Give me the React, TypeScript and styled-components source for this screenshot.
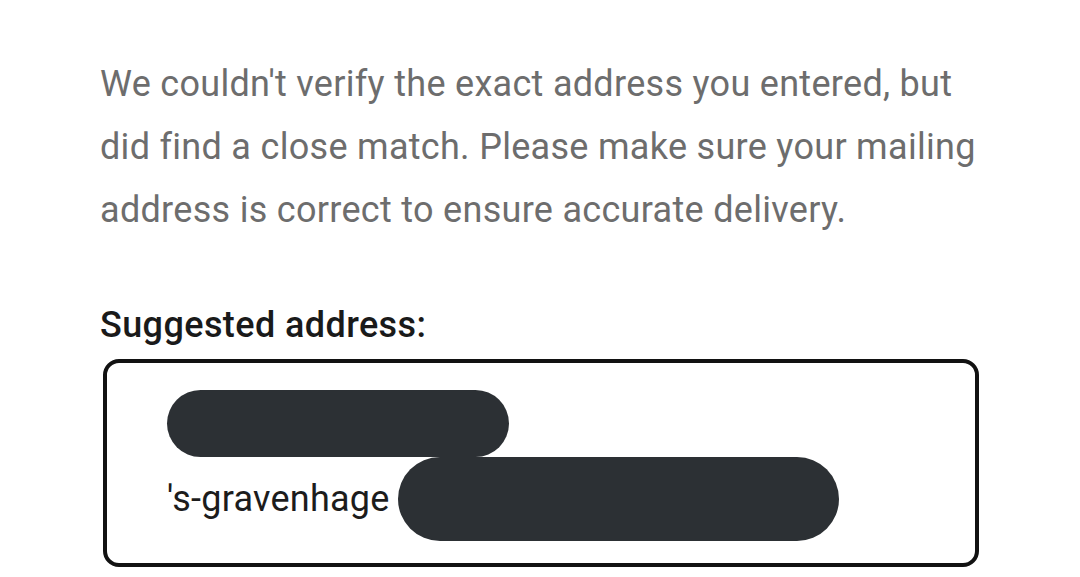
import React from "react";
import styled, { createGlobalStyle } from "styled-components";

const GlobalStyle = createGlobalStyle`
  html, body {
    margin: 0;
    padding: 0;
    background: #ffffff;
  }
  body {
    font-family: Roboto, "Noto Sans", "Liberation Sans", sans-serif;
    -webkit-font-smoothing: antialiased;
  }
`;

const Page = styled.div`
  width: 1080px;
  height: 577px;
  overflow: hidden;
  box-sizing: border-box;
  padding: 53px 0 0 100px;
`;

const Message = styled.p`
  margin: 0;
  width: 900px;
  font-size: 36px;
  line-height: 63px;
  letter-spacing: 0.3px;
  color: #6d6d6d;
  font-weight: 400;
`;

const Label = styled.h3`
  margin: 63px 0 14px;
  font-size: 36px;
  line-height: 40px;
  letter-spacing: 0.4px;
  font-weight: 500;
  color: #1a1a1a;
`;

const AddressBox = styled.div`
  width: 876px;
  margin-left: 3px;
  box-sizing: border-box;
  border: 4px solid #121212;
  border-radius: 16px;
  padding: 27px 0 22px 60px;
  display: flex;
  flex-direction: column;
`;

const Row = styled.div<{ $height: number }>`
  display: flex;
  align-items: center;
  height: ${({ $height }) => $height}px;
`;

const City = styled.span`
  font-size: 36px;
  letter-spacing: 0.25px;
  color: #1c1c1c;
  margin-right: 8px;
`;

const Redacted = styled.div<{ $width: number; $height: number }>`
  width: ${({ $width }) => $width}px;
  height: ${({ $height }) => $height}px;
  border-radius: ${({ $height }) => $height / 2}px;
  background: #2c3034;
`;

export default function App() {
  return (
    <>
      <GlobalStyle />
      <Page>
        <Message>
          We couldn't verify the exact address you entered, but did find a
          close match. Please make sure your mailing address is correct to
          ensure accurate delivery.
        </Message>
        <Label>Suggested address:</Label>
        <AddressBox>
          <Row $height={67}>
            <Redacted $width={342} $height={67} />
          </Row>
          <Row $height={84}>
            <City>'s-gravenhage</City>
            <Redacted $width={441} $height={84} />
          </Row>
        </AddressBox>
      </Page>
    </>
  );
}
